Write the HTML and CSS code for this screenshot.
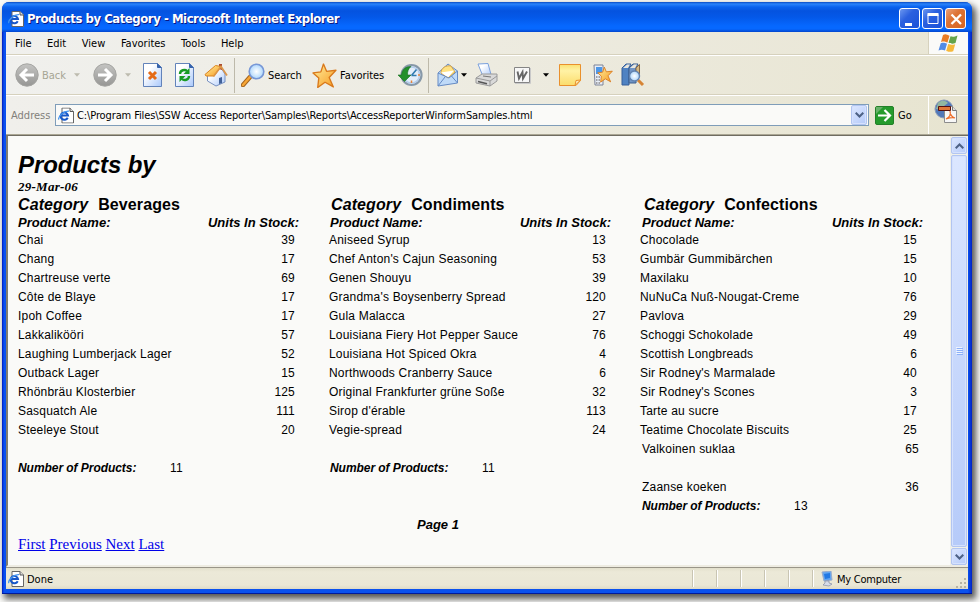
FILE: index.html
```html
<!DOCTYPE html>
<html lang="en">
<head>
<meta charset="utf-8">
<title>Products by Category</title>
<link rel="stylesheet" href="styles.css">
</head>
<body>
<svg class="defs" width="0" height="0">
  <defs>
    <linearGradient id="gray" x1="0" y1="0" x2="0" y2="1"><stop offset="0" stop-color="#c4c4c2"/><stop offset="1" stop-color="#969694"/></linearGradient>
    <linearGradient id="paper" x1="0" y1="0" x2="1" y2="1"><stop offset="0.3" stop-color="#fff"/><stop offset="1" stop-color="#a9c8fb"/></linearGradient>
    <linearGradient id="gold" x1="0" y1="0" x2="1" y2="1"><stop offset="0" stop-color="#fff0a0"/><stop offset="1" stop-color="#f79a20"/></linearGradient>
    <linearGradient id="note" x1="0" y1="0" x2="0" y2="1"><stop offset="0" stop-color="#fae070"/><stop offset=".3" stop-color="#fff2a5"/><stop offset="1" stop-color="#fbdc6b"/></linearGradient>
    <radialGradient id="lens"><stop offset="0" stop-color="#fff"/><stop offset="1" stop-color="#acd6fc"/></radialGradient>
    <symbol id="ie" viewBox="0 0 16 16">
      <path d="M4 .5h8l3.500 3.500v11.500H4z" fill="#fff" stroke="#666"/><path d="M12 .5v3.500h3.500" fill="#ddd" stroke="#555"/>
      <path d="M9.700 10.200A3.700 3.700 0 1 1 10 8H3.500" fill="none" stroke="#1857c8" stroke-width="2"/>
      <path d="M1 12C-.6 10 6 3 11 3.700" fill="none" stroke="#4193ef" stroke-width="1.300"/>
    </symbol>
    <symbol id="star" viewBox="0 0 24 24"><path d="M11 1l3 7 9-1-6.500 7 4 9-8-4.500-7 5 1-9L1 9.500l7.500-1z" fill="url(#gold)" stroke="#d9791b" stroke-width="1.300" stroke-linejoin="round"/></symbol>
    <symbol id="down" viewBox="0 0 7 4"><path d="M0 0h7L3.500 4z"/></symbol>
  </defs>
</svg>
<div class="window">
  <header class="titlebar">
    <svg width="16" height="16"><use href="#ie"/></svg>
    <h1>Products by Category - Microsoft Internet Explorer</h1>
    <div class="controls">
      <span class="ctl"><svg width="21" height="21"><path d="M5 14h7v3H5z" fill="#fff"/></svg></span>
      <span class="ctl"><svg width="21" height="21"><path d="M5 5.500h10v9H5z" fill="none" stroke="#fff"/><path d="M4.500 4h11v3h-11z" fill="#fff"/></svg></span>
      <span class="ctl close"><svg width="21" height="21"><path d="M5.500 5.500l9.500 9.500M15 5.500L5.500 15" stroke="#fff" stroke-width="2.300"/></svg></span>
    </div>
  </header>
  <nav class="menubar">
    <span>File</span><span>Edit</span><span>View</span><span>Favorites</span><span>Tools</span><span>Help</span>
    <div class="flag"><svg width="21" height="19" viewBox="0 0 21 19">
      <path d="M5 1c3-1.500 4 0 6.500.700L9.500 8.500C7 8 6 7 3 8z" fill="#e97c25"/>
      <path d="M12.500 2.300c2.500.800 4 .500 7-.800l-2 7.500c-3 1-4 .800-7-.200z" fill="#64a34a"/>
      <path d="M2.700 9.300c3-1 4-.300 6.300.500l-2 6.700C5 16 3.500 15 .500 16.500z" fill="#528be5"/>
      <path d="M10.200 10c3 1 4 1 7 .200l-2 7c-3 1-4 .800-7-.200z" fill="#f6b83a"/></svg></div>
  </nav>
  <div class="toolbar">
    <svg width="24" height="24"><circle cx="12" cy="12" r="11.200" fill="url(#gray)" stroke="#a5a5a2"/><path d="M19 12H7M12 6l-6 6 6 6" fill="none" stroke="#fff" stroke-width="3"/></svg>
    <span class="off">Back</span>
    <svg class="off" width="6" height="4"><use href="#down"/></svg>
    <svg width="24" height="24"><circle cx="12" cy="12" r="11.200" fill="url(#gray)" stroke="#a5a5a2"/><path d="M5 12h12M12 6l6 6-6 6" fill="none" stroke="#fff" stroke-width="3"/></svg>
    <svg class="off" width="6" height="4"><use href="#down"/></svg>
    <svg width="21" height="24"><path d="M1.500.500h14l4 4v19h-18z" fill="url(#paper)" stroke="#6283ba"/><path d="M15.500.500v4h4" fill="#3764ad" stroke="#3764ad"/><path d="M7 9l7 7M14 9l-7 7" stroke="#e46a17" stroke-width="3"/></svg>
    <svg width="21" height="24"><path d="M1.500.500h14l4 4v19h-18z" fill="url(#paper)" stroke="#6283ba"/><path d="M15.500.500v4h4" fill="#3764ad" stroke="#3764ad"/><path d="M6 11c0-4 5-5 7-3M15 13c0 4-5 5-7 3" fill="none" stroke="#179b25" stroke-width="2.400"/><path d="M15.500 5v6h-6zM5.500 19v-6h6z" fill="#179b25"/></svg>
    <svg width="24" height="24"><path d="M3.500 10v8l8.500 5 9-4v-8l-4-6z" fill="url(#paper)" stroke="#7790c0"/><path d="M15 6V1h3v6" fill="#a94b31"/><path d="M1 11.500L11.500 2.500l5.500 1-7 9.500-8 0z" fill="url(#gold)" stroke="#dc841f"/><path d="M9.500 13.500l7.500-10 6 9" fill="none" stroke="#dc9648" stroke-width="1.700"/><path d="M15 15l3-1v6l-3 1z" fill="#426198"/></svg>
    <i class="sep"></i>
    <svg width="24" height="24"><path d="M9 14l-7 8" stroke="#a36520" stroke-width="4.500" stroke-linecap="round"/><path d="M9 14l-7 8" stroke="#f7a635" stroke-width="2.500" stroke-linecap="round"/><circle cx="15.500" cy="8.500" r="7.300" fill="url(#lens)" stroke="#7797d6" stroke-width="1.600"/></svg>
    <span>Search</span>
    <svg width="25" height="25"><use href="#star"/></svg>
    <span>Favorites</span>
    <svg width="25" height="24"><circle cx="13.500" cy="12" r="10" fill="#e4eefa" stroke="#8798a8" stroke-width="2.200"/><circle cx="13.500" cy="12" r="8" fill="none" stroke="#b4cdec" stroke-width="1.500"/><path d="M13.500 12.500l5-6M13.500 12.500h5" stroke="#317bb0" stroke-width="1.600"/><path d="M13.500 17.500v2.500M20 12h2" stroke="#e3843c" stroke-width="1.500"/><path d="M0 12h3.500C4 6 8 3.500 13 3.500c-3 2.500-3.500 5-3.500 8.500h3.500l-6.500 6.500z" fill="#23902c" stroke="#176e20" stroke-width=".6"/></svg>
    <i class="sep"></i>
    <svg width="22" height="24"><path d="M1 10L11 1l9.500 7v12L1 23z" fill="#bfdaf8" stroke="#668bc4"/><path d="M4 10c0-5 5-8 10-7l4 6-7 6z" fill="#ffe283" stroke="#d7a446"/><path d="M4 9.500l13-2-6 7z" fill="#fff"/><path d="M1 10l11 5L20.500 8M1 23l7-9M20.500 20l-6-7" fill="none" stroke="#668bc4"/></svg>
    <svg width="6" height="4"><use href="#down"/></svg>
    <svg width="25" height="25"><path d="M3 1l10-.500 3 11-8 2z" fill="url(#paper)" stroke="#7aa0dd"/><path d="M1 15l6-4 15 0v7l-7 5-14-3z" fill="#d9d9d9" stroke="#9a9a9a"/><path d="M1 15l14 3 7-5M15 18v5" fill="none" stroke="#999"/><path d="M3 18.500l9 2.200" stroke="#555" stroke-width="1.500"/><path d="M8 13l8 1" stroke="#777"/></svg>
    <svg width="17" height="17"><path d="M.5.500h15v15H.500z" fill="#f7f7f7" stroke="#858585"/><path d="M16.500 1v15.500H1" fill="none" stroke="#c9c9c9"/><path d="M3.500 4.500l1.500 7 3.500-6.500.5 6.500 4-7" fill="none" stroke="#666" stroke-width="1.900"/></svg>
    <svg width="6" height="4"><use href="#down"/></svg>
    <svg width="24" height="24"><path d="M1.500 1.500h21v16L18 22.500H1.500z" fill="url(#note)" stroke="#e9902c"/><path d="M17 22.500l1-5 4.500-.500z" fill="#fff2c0" stroke="#e9902c"/></svg>
    <svg width="22" height="24"><path d="M2 2h9v20H3z" fill="#e8eef8" stroke="#7d8396"/><path d="M4 4h6v7H4z" fill="#4d97e8"/><path d="M4 14h5M4 17h5M4 20h5" stroke="#888" stroke-width="1.500" stroke-dasharray="1.500 1"/><use href="#star" x="5" y="3" width="16" height="17"/></svg>
    <svg width="24" height="24"><path d="M1 5l4-4h5l-2 4v17H1z" fill="#4f82c2" stroke="#365e99"/><path d="M8 5l4-4h5l-2 4v15H8z" fill="#7196c7" stroke="#3c5e8d"/><path d="M2 5l4-3.500h3L7 5zM9 5l4-3.500h3L14 5z" fill="#e9e6dc"/><path d="M15 5l3.500-3.500v12L15 17z" fill="#d5b883" stroke="#876b47"/><path d="M17 17l5 5" stroke="#d68435" stroke-width="3"/><circle cx="13.500" cy="13" r="5" fill="url(#lens)" stroke="#6382ae" stroke-width="1.400"/></svg>
  </div>
  <div class="addressbar">
    <label>Address</label>
    <div class="field"><svg width="16" height="17" viewBox="0 0 16 16"><use href="#ie"/></svg><span>C:\Program Files\SSW Access Reporter\Samples\Reports\AccessReporterWinformSamples.html</span><b class="sbtn"><svg width="9" height="6"><path d="M.7.700L4.500 4.500 8.300.700" fill="none" stroke="#4d6185" stroke-width="2"/></svg></b></div>
    <svg class="goicon" width="19" height="19"><rect x=".5" y=".5" width="18" height="18" rx="1.500" fill="#259b2d" stroke="#238029"/><path d="M1 1h7L1 8z" fill="#79b67b" opacity=".8"/><path d="M3 9.500h11M9.500 4l5.500 5.500-5.500 5.500" fill="none" stroke="#fff" stroke-width="2.200"/></svg>
    <span class="go">Go</span>
    <div class="pdf"><svg width="24" height="25"><circle cx="10" cy="10" r="9" fill="#5278b9" stroke="#8b9bb7"/><path d="M4 4c4-4 9-2 10 0l-4 3-3 4-5-1z" fill="#92b7a0"/><path d="M10.500 7.500h8l4 4v12h-12z" fill="#f7f7f7" stroke="#8c8c8c"/><path d="M18.500 7.500v4h4" fill="#ddd" stroke="#777"/><path d="M12 20c4-2 5-5 4-8 0 4 2 6 5 7-3-1-6 0-9 1z" fill="none" stroke="#ed6c28" stroke-width="1.200"/><path d="M4.500 7.500h12v4h-12z" fill="#df7638" stroke="#59120f"/></svg></div>
  </div>
  <main class="view">
    <article class="report">
      <h2>Products by</h2>
      <p class="date">29-Mar-06</p>
      <div class="columns">
        <section>
          <h3><em>Category</em>Beverages</h3>
          <div class="head"><span>Product Name:</span><span>Units In Stock:</span></div>
          <div class="row"><span>Chai</span><span>39</span></div>
          <div class="row"><span>Chang</span><span>17</span></div>
          <div class="row"><span>Chartreuse verte</span><span>69</span></div>
          <div class="row"><span>Côte de Blaye</span><span>17</span></div>
          <div class="row"><span>Ipoh Coffee</span><span>17</span></div>
          <div class="row"><span>Lakkalikööri</span><span>57</span></div>
          <div class="row"><span>Laughing Lumberjack Lager</span><span>52</span></div>
          <div class="row"><span>Outback Lager</span><span>15</span></div>
          <div class="row"><span>Rhönbräu Klosterbier</span><span>125</span></div>
          <div class="row"><span>Sasquatch Ale</span><span>111</span></div>
          <div class="row"><span>Steeleye Stout</span><span>20</span></div>
          <div class="total gap"><strong>Number of Products:</strong><span>11</span></div>
        </section>
        <section class="second">
          <h3><em>Category</em>Condiments</h3>
          <div class="head"><span>Product Name:</span><span>Units In Stock:</span></div>
          <div class="row"><span>Aniseed Syrup</span><span>13</span></div>
          <div class="row"><span>Chef Anton's Cajun Seasoning</span><span>53</span></div>
          <div class="row"><span>Genen Shouyu</span><span>39</span></div>
          <div class="row"><span>Grandma's Boysenberry Spread</span><span>120</span></div>
          <div class="row"><span>Gula Malacca</span><span>27</span></div>
          <div class="row"><span>Louisiana Fiery Hot Pepper Sauce</span><span>76</span></div>
          <div class="row"><span>Louisiana Hot Spiced Okra</span><span>4</span></div>
          <div class="row"><span>Northwoods Cranberry Sauce</span><span>6</span></div>
          <div class="row"><span>Original Frankfurter grüne Soße</span><span>32</span></div>
          <div class="row"><span>Sirop d'érable</span><span>113</span></div>
          <div class="row"><span>Vegie-spread</span><span>24</span></div>
          <div class="total gap"><strong>Number of Products:</strong><span>11</span></div>
        </section>
        <section class="third">
          <h3><em>Category</em>Confections</h3>
          <div class="head"><span>Product Name:</span><span>Units In Stock:</span></div>
          <div class="row"><span>Chocolade</span><span>15</span></div>
          <div class="row"><span>Gumbär Gummibärchen</span><span>15</span></div>
          <div class="row"><span>Maxilaku</span><span>10</span></div>
          <div class="row"><span>NuNuCa Nuß-Nougat-Creme</span><span>76</span></div>
          <div class="row"><span>Pavlova</span><span>29</span></div>
          <div class="row"><span>Schoggi Schokolade</span><span>49</span></div>
          <div class="row"><span>Scottish Longbreads</span><span>6</span></div>
          <div class="row"><span>Sir Rodney's Marmalade</span><span>40</span></div>
          <div class="row"><span>Sir Rodney's Scones</span><span>3</span></div>
          <div class="row"><span>Tarte au sucre</span><span>17</span></div>
          <div class="row"><span>Teatime Chocolate Biscuits</span><span>25</span></div>
          <div class="row late"><span>Valkoinen suklaa</span><span>65</span></div>
          <div class="row late gap"><span>Zaanse koeken</span><span>36</span></div>
          <div class="total"><strong>Number of Products:</strong><span>13</span></div>
        </section>
      </div>
      <p class="page">Page 1</p>
      <p class="links"><a href="#">First</a> <a href="#">Previous</a> <a href="#">Next</a> <a href="#">Last</a></p>
    </article>
    <div class="scroll">
      <b class="sbtn"><svg width="9" height="6"><path d="M.7 5.300L4.500 1.500 8.300 5.300" fill="none" stroke="#4d6185" stroke-width="2"/></svg></b>
      <b class="sbtn thumb"><svg width="7" height="8"><path d="M0 .500h6M0 2.500h6M0 4.500h6M0 6.500h6" stroke="#eef4fe"/><path d="M1 1.500h6M1 3.500h6M1 5.500h6M1 7.500h6" stroke="#8cb0f8"/></svg></b>
      <b class="sbtn"><svg width="9" height="6"><path d="M.7.700L4.500 4.500 8.300.700" fill="none" stroke="#4d6185" stroke-width="2"/></svg></b>
    </div>
  </main>
  <footer class="status">
    <svg width="16" height="16"><use href="#ie"/></svg><span class="done">Done</span>
    <i></i><i></i><i></i><i></i><i></i><i class="last"></i>
    <svg class="pc" width="14" height="16"><path d="M2 1l9-1 1 9-8 1z" fill="#61a5f2" stroke="#9aaccb"/><path d="M4 3l6-1v5l-5 1z" fill="#2279e4"/><path d="M5 10h4v2l3 1-3 2-6-1 2-2z" fill="#d8dce8" stroke="#858da4" stroke-width=".7"/></svg>
    <span class="mycomp">My Computer</span>
    <svg class="grip" width="12" height="12"><path d="M9 1h2v2H9zM5 5h2v2H5zM9 5h2v2H9zM1 9h2v2H1zM5 9h2v2H5zM9 9h2v2H9z" fill="#b8b4a3"/></svg>
  </footer>
</div>
</body>
</html>
```
FILE: styles.css
```css
* { box-sizing: border-box; }
body { margin: 0; padding: 2px 0 0 2px; height: 602px; overflow: hidden; background: #fafaf8; color: #000; font: 11px/14px "DejaVu Sans Condensed", "Liberation Sans", sans-serif; }
h1, h2, h3, p { margin: 0; }
svg { display: block; flex: none; }
.defs { position: absolute; }

.window { width: 970px; height: 592px; display: flex; flex-direction: column; border-radius: 7px 7px 0 0; background: linear-gradient(90deg, #0019bd, #0a4ff0 2px, #0a51ee 4px, #0a51ee 966px, #0021c4); padding: 0 4px 4px; border-bottom: 1px solid #001a9c; box-shadow: 3px 4px 6px 1px rgba(0, 0, 0, .65); }

.titlebar { height: 30px; flex: none; margin: 0 -4px; padding: 3px 6px 0 6px; display: flex; align-items: center; border-radius: 7px 7px 0 0; background: linear-gradient(#0a4bc4, #2a83fb 2px, #0a62ee 5px, #0553df 9px, #0458e8 15px, #0668ff 24px, #0668ff 27px, #0345cc); }
.titlebar h1 { margin-left: 3px; padding-top: 1px; flex: 1; font: bold 13px/18px "DejaVu Sans Condensed", sans-serif; letter-spacing: -.46px; color: #fff; text-shadow: 1px 1px #0a1883; white-space: nowrap; }
.controls { display: flex; gap: 2px; }
.ctl { width: 21px; height: 21px; border: 1px solid #fff; border-radius: 3px; background: linear-gradient(135deg, #6c97f0, #2b60df 40%, #1a52d8); display: grid; place-items: center; overflow: hidden; }
.close { background: linear-gradient(135deg, #eba079, #dd7335 40%, #d8641f); }

.menubar { height: 23px; flex: none; display: flex; align-items: center; padding-left: 9px; background: linear-gradient(90deg, #f0f0ed, #edebe0 50%, #e9e6d5); border-bottom: 1px solid #d6d1bd; }
.menubar span { margin-right: 15.6px; padding-top: 1px; }
.flag { margin-left: auto; width: 40px; height: 22px; background: #fafaf8; border-left: 1px solid #d6d1bd; display: grid; place-items: center; }

.toolbar { height: 40px; flex: none; padding-left: 9px; display: grid; grid-template-columns: 27px 32px 19px 32px 17px 32px 30px 30px 7px 27px 44px 28px 58px 30px 9px 24px 14px 39px 29px 15px 34px 29px 25px; align-items: center; background: linear-gradient(90deg, #f0f0ed, #edebe0 50%, #e8e5d2); border-top: 1px solid #fff; border-bottom: 1px solid #d6d1bd; }
.toolbar span { padding-top: 1px; letter-spacing: -.05px; }
.sep { width: 1px; height: 35px; background: #bdb9aa; }
.off { color: #a6a594; fill: #bdbbae; }

.addressbar { height: 40px; flex: none; display: flex; align-items: center; padding-left: 5px; background: linear-gradient(90deg, #f0efeb, #edebe0 50%, #e7e4d0); border-top: 1px solid #fff; border-bottom: 1px solid #aaa694; }
.addressbar label { width: 44px; padding-top: 1px; color: #82807a; }
.field { width: 814px; height: 22px; border: 1px solid #7f9db9; background: #fafaf8; display: flex; align-items: center; padding: 0 1px 0 2px; }
.field span { flex: 1; margin-left: 3px; padding-top: 2px; letter-spacing: -.115px; white-space: nowrap; }
.sbtn { display: grid; place-items: center; width: 16px; height: 17px; flex: none; border: 1px solid #b2c5f1; border-radius: 2px; background: linear-gradient(135deg, #dce7ff, #b5caf9); box-shadow: inset 0 0 0 1px #d5e1fd; }
.field .sbtn { height: 20px; }
.goicon { margin-left: 6px; }
.go { margin-left: 4px; padding-top: 1px; }
.pdf { margin-left: auto; width: 40px; height: 38px; border-left: 1px solid #fff; display: flex; align-items: center; padding: 0 0 7px 5px; }

.view { height: 432px; flex: none; display: flex; background: #fafaf8; border-top: 1px solid #6f6c61; border-left: 2px solid #807c70; border-bottom: 2px solid #eeece2; }
.report { flex: 1; min-width: 0; padding: 14px 0 0 10px; font-family: "Liberation Sans", sans-serif; }
.report h2 { font: italic bold 24px/28px "Liberation Sans", sans-serif; padding-top: 1px; height: 28px; letter-spacing: -.1px; }
.date { font: italic bold 13px/18px "Liberation Serif", serif; letter-spacing: .25px; }
.columns { display: grid; grid-template-columns: 312px 312px 300px; height: 320px; }
.report h3 { font: bold 16px/17px "Liberation Sans", sans-serif; letter-spacing: .1px; }
.report h3 em { margin-right: 10px; }
.head { width: 281px; height: 18px; padding-top: 1px; display: flex; justify-content: space-between; font: italic bold 13px/18px "Liberation Sans", sans-serif; }
.row { width: 277px; height: 19px; display: flex; justify-content: space-between; font-size: 12px; line-height: 19px; letter-spacing: .2px; }
.total { height: 19px; display: flex; font-size: 12px; line-height: 19px; }
.total strong { width: 152px; font-style: italic; letter-spacing: -.05px; }
.total span { letter-spacing: .3px; }
.gap { margin-top: 19px; }
.second h3 { padding-left: 1px; }
.third h3 { padding-left: 2px; }
.second .row { margin-left: -1px; }
.third .row { margin-left: -2px; }
.third .late { margin-left: 0; }
.page { padding-left: 399px; font: italic bold 13px/17px "Liberation Sans", sans-serif; }
.links { padding-top: 2px; font: 15px/19px "Liberation Serif", serif; }
.links a { color: #0000e8; text-decoration: underline; }
.scroll { width: 18px; flex: none; display: flex; flex-direction: column; align-items: center; gap: 1px; padding-top: 1px; background: #f0f0e9; }
.thumb { height: 392px; }

.status { flex: 1; display: flex; align-items: center; padding-left: 2px; border-top: 1px solid #999588; background: linear-gradient(#e2dfcc, #ece9d8 4px, #eae7d6 17px, #dedac7); }
.status i { width: 2px; height: 17px; margin-right: 22px; border-left: 1px solid #c9c5b3; border-right: 1px solid #fff; }
.status .last { margin-right: 6px; }
.done { width: 665px; margin-left: 3px; padding-top: 2px; }
.pc { margin-right: 3px; }
.mycomp { padding-top: 2px; letter-spacing: -.25px; }
.grip { margin: 8px 1px 0 auto; }
```
